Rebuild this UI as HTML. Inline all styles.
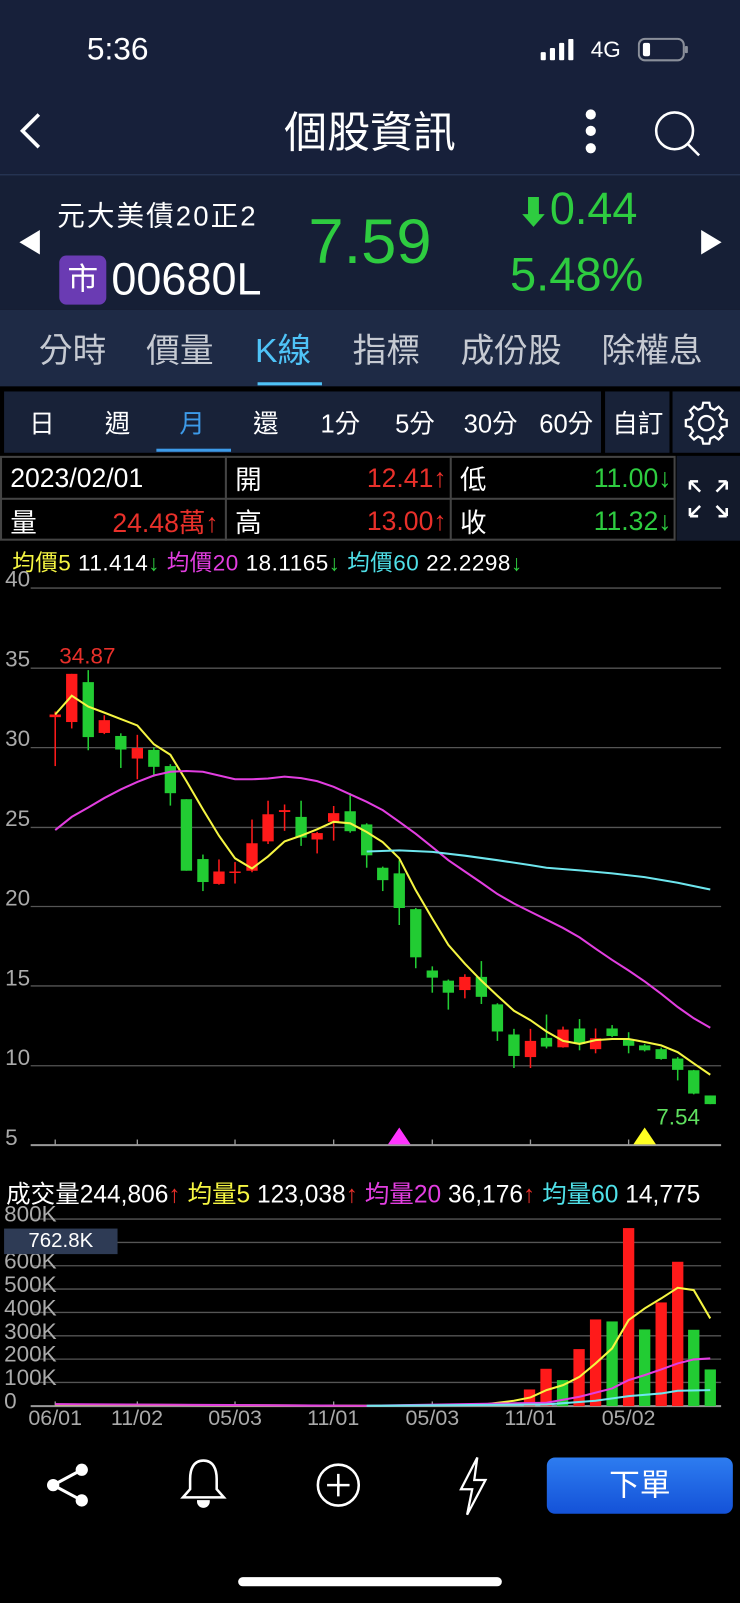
<!DOCTYPE html>
<html><head><meta charset="utf-8"><style>
*{margin:0;padding:0;box-sizing:border-box}
body{width:740px;height:1602px;background:#000;overflow:hidden;font-family:"Liberation Sans","Noto Sans CJK TC",sans-serif;color:#fff}
#w{position:absolute;left:0;top:0;width:724px;height:1568px;transform:scale(1.0221);transform-origin:0 0;overflow:hidden}
.a{position:absolute;white-space:nowrap}
.c{transform:translate(-50%,-50%)}
.l{transform:translateY(-50%)}
</style></head><body><div id="w">
<div class="a" style="left:0;top:0;width:724px;height:170px;background:#17203a"></div>
<div class="a l" style="left:85px;top:48px;font-size:31px">5:36</div>
<svg class="a" style="left:528px;top:38px" width="40" height="22"><rect x="1" y="13" width="5" height="8" rx="1" fill="#fff"/><rect x="10" y="9" width="5" height="12" rx="1" fill="#fff"/><rect x="19" y="4" width="5" height="17" rx="1" fill="#fff"/><rect x="28" y="0" width="5" height="21" rx="1" fill="#fff"/></svg>
<div class="a l" style="left:578px;top:49px;font-size:22px">4G</div>
<svg class="a" style="left:624px;top:36px" width="50" height="26"><rect x="1" y="2" width="44" height="21" rx="6" fill="none" stroke="#8a8f9a" stroke-width="2"/><rect x="5" y="6" width="7" height="13" rx="2" fill="#fff"/><rect x="46" y="9" width="3" height="7" rx="1" fill="#8a8f9a"/></svg>
<svg class="a" style="left:14px;top:108px" width="30" height="40"><path d="M24 4 L8 20 L24 36" fill="none" stroke="#fff" stroke-width="3.5"/></svg>
<div class="a c" style="left:362px;top:127px;font-size:42px">個股資訊</div>
<svg class="a" style="left:568px;top:104px" width="20" height="50"><circle cx="10" cy="8" r="5" fill="#fff"/><circle cx="10" cy="24" r="5" fill="#fff"/><circle cx="10" cy="41" r="5" fill="#fff"/></svg>
<svg class="a" style="left:638px;top:106px" width="50" height="50"><circle cx="22" cy="22" r="18" fill="none" stroke="#fff" stroke-width="2.5"/><path d="M35 35 L46 46" stroke="#fff" stroke-width="2.5"/></svg>
<div class="a" style="left:0;top:170px;width:724px;height:2px;background:#253352"></div>
<div class="a" style="left:0;top:172px;width:724px;height:131px;background:#161f36"></div>
<svg class="a" style="left:15px;top:222px" width="30" height="30"><path d="M24 3 L4 15 L24 27Z" fill="#fff"/></svg>
<svg class="a" style="left:682px;top:222px" width="30" height="30"><path d="M4 3 L24 15 L4 27Z" fill="#fff"/></svg>
<div class="a l" style="left:56px;top:209px;font-size:27px;letter-spacing:2px">元大美債20正2</div>
<div class="a" style="left:58px;top:250px;width:46px;height:48px;background:#6a3bb3;border-radius:7px;font-size:30px;text-align:center;line-height:48px">市</div>
<div class="a l" style="left:109px;top:274px;font-size:44px">00680L</div>
<div class="a c" style="left:362px;top:237px;font-size:62px;color:#2ecc40">7.59</div>
<div class="a l" style="left:506px;top:205px;font-size:44px;color:#2ecc40"><span style="font-size:32px">⬇</span>0.44</div>
<div class="a l" style="left:499px;top:268px;font-size:46px;color:#2ecc40">5.48%</div>
<div class="a" style="left:0;top:303px;width:724px;height:75px;background:#1e2a45"></div>
<div class="a c" style="left:71px;top:340px;font-size:33px;color:#c6cad2">分時</div>
<div class="a c" style="left:176px;top:340px;font-size:33px;color:#c6cad2">價量</div>
<div class="a c" style="left:277px;top:340px;font-size:33px;color:#4fc3f7">K線</div>
<div class="a c" style="left:378px;top:340px;font-size:33px;color:#c6cad2">指標</div>
<div class="a c" style="left:500px;top:340px;font-size:33px;color:#c6cad2">成份股</div>
<div class="a c" style="left:638px;top:340px;font-size:33px;color:#c6cad2">除權息</div>
<div class="a" style="left:252px;top:374px;width:63px;height:3px;background:#4fc3f7"></div>
<div class="a" style="left:4px;top:383px;width:584px;height:60px;background:#182238"></div>
<div class="a" style="left:592px;top:383px;width:63px;height:60px;background:#182238"></div>
<div class="a" style="left:658px;top:383px;width:66px;height:60px;background:#182238"></div>
<div class="a c" style="left:41px;top:413px;font-size:25px">日</div>
<div class="a c" style="left:115px;top:413px;font-size:25px">週</div>
<div class="a c" style="left:188px;top:413px;font-size:25px;color:#3d9be9">月</div>
<div class="a c" style="left:260px;top:413px;font-size:25px">還</div>
<div class="a c" style="left:333px;top:413px;font-size:25px">1分</div>
<div class="a c" style="left:406px;top:413px;font-size:25px">5分</div>
<div class="a c" style="left:480px;top:413px;font-size:25px">30分</div>
<div class="a c" style="left:554px;top:413px;font-size:25px">60分</div>
<div class="a c" style="left:624px;top:413px;font-size:25px">自訂</div>
<div class="a" style="left:153px;top:439px;width:73px;height:3px;background:#3d9be9"></div>
<svg class="a" style="left:668px;top:391px" width="46" height="46" viewBox="0 0 46 46"><path d="M20 3h6l1 5 4 2 4-3 4 4-3 4 2 4 5 1v6l-5 1-2 4 3 4-4 4-4-3-4 2-1 5h-6l-1-5-4-2-4 3-4-4 3-4-2-4-5-1v-6l5-1 2-4-3-4 4-4 4 3 4-2z" fill="none" stroke="#fff" stroke-width="2.2"/><circle cx="23" cy="23" r="7" fill="none" stroke="#fff" stroke-width="2.2"/></svg>
<div class="a" style="left:0;top:446px;width:661px;height:83px;border:2px solid #444;background:#000"></div>
<div class="a" style="left:0;top:487px;width:661px;height:2px;background:#444"></div>
<div class="a" style="left:220px;top:446px;width:2px;height:83px;background:#444"></div>
<div class="a" style="left:440px;top:446px;width:2px;height:83px;background:#444"></div>
<div class="a" style="left:662px;top:446px;width:62px;height:83px;background:#131a2b"></div>
<div class="a l" style="left:10px;top:468px;font-size:26px">2023/02/01</div>
<div class="a l" style="left:230px;top:468px;font-size:26px">開</div>
<div class="a l" style="right:287px;top:468px;font-size:26px;color:#e8302a">12.41↑</div>
<div class="a l" style="left:450px;top:468px;font-size:26px">低</div>
<div class="a l" style="right:67px;top:468px;font-size:26px;color:#2ecc40">11.00↓</div>
<div class="a l" style="left:10px;top:510px;font-size:26px">量</div>
<div class="a l" style="right:510px;top:510px;font-size:26px;color:#e8302a">24.48萬↑</div>
<div class="a l" style="left:230px;top:510px;font-size:26px">高</div>
<div class="a l" style="right:287px;top:510px;font-size:26px;color:#e8302a">13.00↑</div>
<div class="a l" style="left:450px;top:510px;font-size:26px">收</div>
<div class="a l" style="right:67px;top:510px;font-size:26px;color:#2ecc40">11.32↓</div>
<svg class="a" style="left:672px;top:468px" width="42" height="40" fill="none" stroke="#fff" stroke-width="2.5"><path d="M3 3L13 13M3 3h8M3 3v8M39 3L29 13M39 3h-8M39 3v8M3 37L13 27M3 37h8M3 37v-8M39 37L29 27M39 37h-8M39 37v-8"/></svg>
<div class="a l" style="left:12px;top:549px;font-size:22px;letter-spacing:0.5px"><span style="color:#f5f542">均價5</span> 11.414<span style="color:#2ecc40">↓</span> <span style="color:#e23ee0">均價20</span> 18.1165<span style="color:#2ecc40">↓</span> <span style="color:#4fe0e8">均價60</span> 22.2298<span style="color:#2ecc40">↓</span></div>
<svg class="a" style="left:0;top:557.7px" width="724" height="577.5" viewBox="0 0 1568 1568" preserveAspectRatio="none" id="k"></svg>
<div class="a l" style="left:5px;top:567px;font-size:22px;color:#aaa">40</div>
<div class="a l" style="left:5px;top:645px;font-size:22px;color:#aaa">35</div>
<div class="a l" style="left:5px;top:723px;font-size:22px;color:#aaa">30</div>
<div class="a l" style="left:5px;top:801px;font-size:22px;color:#aaa">25</div>
<div class="a l" style="left:5px;top:879px;font-size:22px;color:#aaa">20</div>
<div class="a l" style="left:5px;top:957px;font-size:22px;color:#aaa">15</div>
<div class="a l" style="left:5px;top:1035px;font-size:22px;color:#aaa">10</div>
<div class="a l" style="left:5px;top:1113px;font-size:22px;color:#aaa">5</div>
<div class="a l" style="left:58px;top:642px;font-size:22px;color:#e8302a">34.87</div>
<div class="a l" style="left:642px;top:1093px;font-size:22px;color:#5fe05f">7.54</div>
<div class="a l" style="left:6px;top:1166px;font-size:24px">成交量244,806<span style="color:#e8302a">↑</span> <span style="color:#f5f542">均量5</span> 123,038<span style="color:#e8302a">↑</span> <span style="color:#e23ee0">均量20</span> 36,176<span style="color:#e8302a">↑</span> <span style="color:#4fe0e8">均量60</span> 14,775</div>
<svg class="a" style="left:0;top:1135px" width="724" height="432.5" viewBox="0 0 1568 1326" preserveAspectRatio="none" id="v"></svg>
<div class="a" style="left:4px;top:1177px;font-size:22px;color:#aaa;line-height:22.9px">800K<br>700K<br>600K<br>500K<br>400K<br>300K<br>200K<br>100K<br>0</div>
<div class="a" style="left:4px;top:1202px;width:111px;height:25px;background:#2e3b55;font-size:20px;text-align:center;line-height:25px">762.8K</div>
<div class="a" style="left:0;top:1378px;width:724px;font-size:21px;color:#aaa">
<span class="a c" style="left:54px;top:10px">06/01</span><span class="a c" style="left:134px;top:10px">11/02</span><span class="a c" style="left:230px;top:10px">05/03</span><span class="a c" style="left:326px;top:10px">11/01</span><span class="a c" style="left:423px;top:10px">05/03</span><span class="a c" style="left:519px;top:10px">11/01</span><span class="a c" style="left:615px;top:10px">05/02</span></div>
<svg class="a" style="left:44px;top:1430px" width="46" height="46"><circle cx="36" cy="8" r="6" fill="#fff"/><circle cx="8" cy="23" r="6" fill="#fff"/><circle cx="36" cy="38" r="6" fill="#fff"/><path d="M36 8L8 23L36 38" stroke="#fff" stroke-width="3" fill="none"/></svg>
<svg class="a" style="left:176px;top:1425px" width="46" height="56" fill="none" stroke="#fff" stroke-width="2.5"><path d="M23 4c-10 0-13 9-13 18v10l-7 8h40l-7-8V22c0-9-3-18-13-18z"/><path d="M18 44a5 5 0 0 0 10 0z" fill="#fff"/></svg>
<svg class="a" style="left:308px;top:1430px" width="46" height="46"><circle cx="23" cy="23" r="20" fill="none" stroke="#fff" stroke-width="2.5"/><path d="M23 12v22M12 23h22" stroke="#fff" stroke-width="2.5"/></svg>
<svg class="a" style="left:447px;top:1424px" width="32" height="60" fill="none" stroke="#fff" stroke-width="2.2"><path d="M20 2L4 33h11L10 58 28 24H17z"/></svg>
<div class="a" style="left:535px;top:1426px;width:182px;height:55px;border-radius:8px;background:linear-gradient(#2d7cf0,#1452d8);font-size:30px;text-align:center;line-height:55px">下單</div>
<div class="a" style="left:233px;top:1543px;width:258px;height:9px;border-radius:5px;background:#fff"></div>
</div>
<script>
var NS="http://www.w3.org/2000/svg";
function el(p,t,a){var e=document.createElementNS(NS,t);for(var k in a)e.setAttribute(k,a[k]);e.setAttribute("vector-effect","non-scaling-stroke");p.appendChild(e);return e}
var k=document.getElementById("k");
[47,260,471,683,893,1104,1316].forEach(function(y){el(k,"line",{x1:65,x2:1528,y1:y,y2:y,stroke:"#555","stroke-width":1.3})});
el(k,"line",{x1:65,x2:1528,y1:1527,y2:1527,stroke:"#999","stroke-width":2});
[117,291,498,707,916,1124,1332].forEach(function(x){el(k,"line",{x1:x,x2:x,y1:1512,y2:1527,stroke:"#999","stroke-width":1.3})});
var C=[[117,'r',383,390,375,520],[152,'r',275,403,275,420],[187,'g',297,443,265,478],[221,'r',398,432,385,435],[256,'g',440,476,433,525],[291,'r',472,500,437,555],[326,'g',477,522,470,548],[361,'g',520,592,515,625],[395,'g',608,798,608,798],[430,'g',767,828,755,852],[464,'r',800,833,768,835],[498,'r',800,803,775,832],[534,'r',725,798,662,802],[568,'r',648,720,612,727],[603,'r',637,642,622,692],[638,'g',655,710,612,732],[672,'r',698,715,695,752],[707,'r',645,668,626,718],[742,'g',640,693,592,697],[777,'g',675,757,672,790],[811,'g',790,823,787,852],[846,'g',805,897,770,942],[881,'g',900,1028,897,1057],[916,'g',1063,1082,1052,1122],[950,'g',1090,1122,1087,1167],[985,'r',1080,1115,1073,1137],[1020,'g',1080,1133,1038,1152],[1054,'g',1153,1225,1150,1250],[1089,'g',1233,1290,1218,1322],[1124,'r',1250,1293,1218,1322],[1158,'g',1242,1265,1180,1270],[1193,'r',1220,1267,1212,1268],[1228,'g',1217,1258,1192,1275],[1262,'r',1243,1272,1217,1283],[1297,'g',1217,1237,1208,1240],[1332,'g',1245,1263,1227,1283],[1366,'g',1262,1275,1258,1278],[1401,'g',1272,1298,1268,1300],[1436,'g',1297,1327,1293,1355],[1470,'g',1328,1390,1327,1392],[1505,'g',1395,1418,1395,1418]];
C.forEach(function(c){var col=c[1]=='r'?'#ff1a1a':'#22cc33';el(k,"line",{x1:c[0],x2:c[0],y1:c[4],y2:c[5],stroke:col,"stroke-width":1.5});el(k,"rect",{x:c[0]-12,y:c[2],width:24,height:Math.max(c[3]-c[2],4),fill:col})});
function pl(p,pts,col,w){el(p,"polyline",{points:pts.map(function(q){return q.join(',')}).join(' '),fill:"none",stroke:col,"stroke-width":w})}
pl(k,[[117,383],[152,333],[187,362],[221,378],[256,395],[291,412],[326,462],[361,490],[395,560],[430,635],[464,705],[498,765],[534,792],[568,760],[603,720],[638,705],[672,688],[707,668],[742,672],[777,695],[811,722],[846,765],[881,850],[916,925],[950,995],[985,1045],[1020,1090],[1054,1130],[1089,1170],[1124,1195],[1158,1225],[1193,1250],[1228,1258],[1262,1248],[1297,1245],[1332,1245],[1366,1253],[1401,1262],[1436,1280],[1470,1310],[1505,1340]],"#f5f542",2);
pl(k,[[117,690],[152,655],[187,630],[221,605],[256,582],[291,562],[326,545],[361,535],[395,533],[430,535],[464,545],[498,555],[534,555],[568,553],[603,548],[638,552],[672,560],[707,575],[742,595],[777,615],[811,637],[846,668],[881,700],[916,735],[950,770],[985,800],[1020,830],[1054,860],[1089,885],[1124,907],[1158,928],[1193,950],[1228,975],[1262,1005],[1297,1035],[1332,1063],[1366,1092],[1401,1125],[1436,1160],[1470,1190],[1505,1215]],"#e23ee0",2);
pl(k,[[777,747],[846,744],[916,748],[985,758],[1054,770],[1124,783],[1158,790],[1228,797],[1297,805],[1366,815],[1436,830],[1505,848]],"#6ee6ee",2);
el(k,"path",{d:"M846 1480L822 1525H870Z",fill:"#ff33ff"});
el(k,"path",{d:"M1366 1480L1342 1525H1390Z",fill:"#ffff22"});
var v=document.getElementById("v");
[177,247,317,387,457,527,597,667].forEach(function(y){el(v,"line",{x1:65,x2:1528,y1:y,y2:y,stroke:"#555","stroke-width":1.3})});
el(v,"line",{x1:65,x2:1528,y1:738,y2:738,stroke:"#999","stroke-width":2});
[117,291,498,707,916,1124,1332].forEach(function(x){el(v,"line",{x1:x,x2:x,y1:724,y2:738,stroke:"#999","stroke-width":1.3})});
[[1122,'r',688],[1157,'r',626],[1192,'g',660],[1227,'r',567],[1262,'r',478],[1297,'g',484],[1332,'r',204],[1366,'g',508],[1401,'r',427],[1436,'r',305],[1470,'g',509],[1505,'g',628]].forEach(function(b){el(v,"rect",{x:b[0]-12,y:b[2],width:24,height:738-b[2],fill:b[1]=='r'?'#ff1a1a':'#22cc33'})});
pl(v,[[117,733],[777,737],[1020,734],[1089,722],[1124,712],[1158,690],[1193,675],[1228,650],[1262,610],[1297,565],[1332,480],[1366,445],[1401,415],[1436,383],[1470,390],[1505,475]],"#f5f542",2);
pl(v,[[117,732],[777,737],[1158,728],[1228,710],[1297,685],[1332,660],[1366,645],[1401,628],[1436,610],[1470,598],[1505,595]],"#e23ee0",2);
pl(v,[[777,737],[1158,733],[1262,722],[1332,708],[1401,700],[1436,692],[1505,690]],"#6ee6ee",2);
</script>
</body></html>
